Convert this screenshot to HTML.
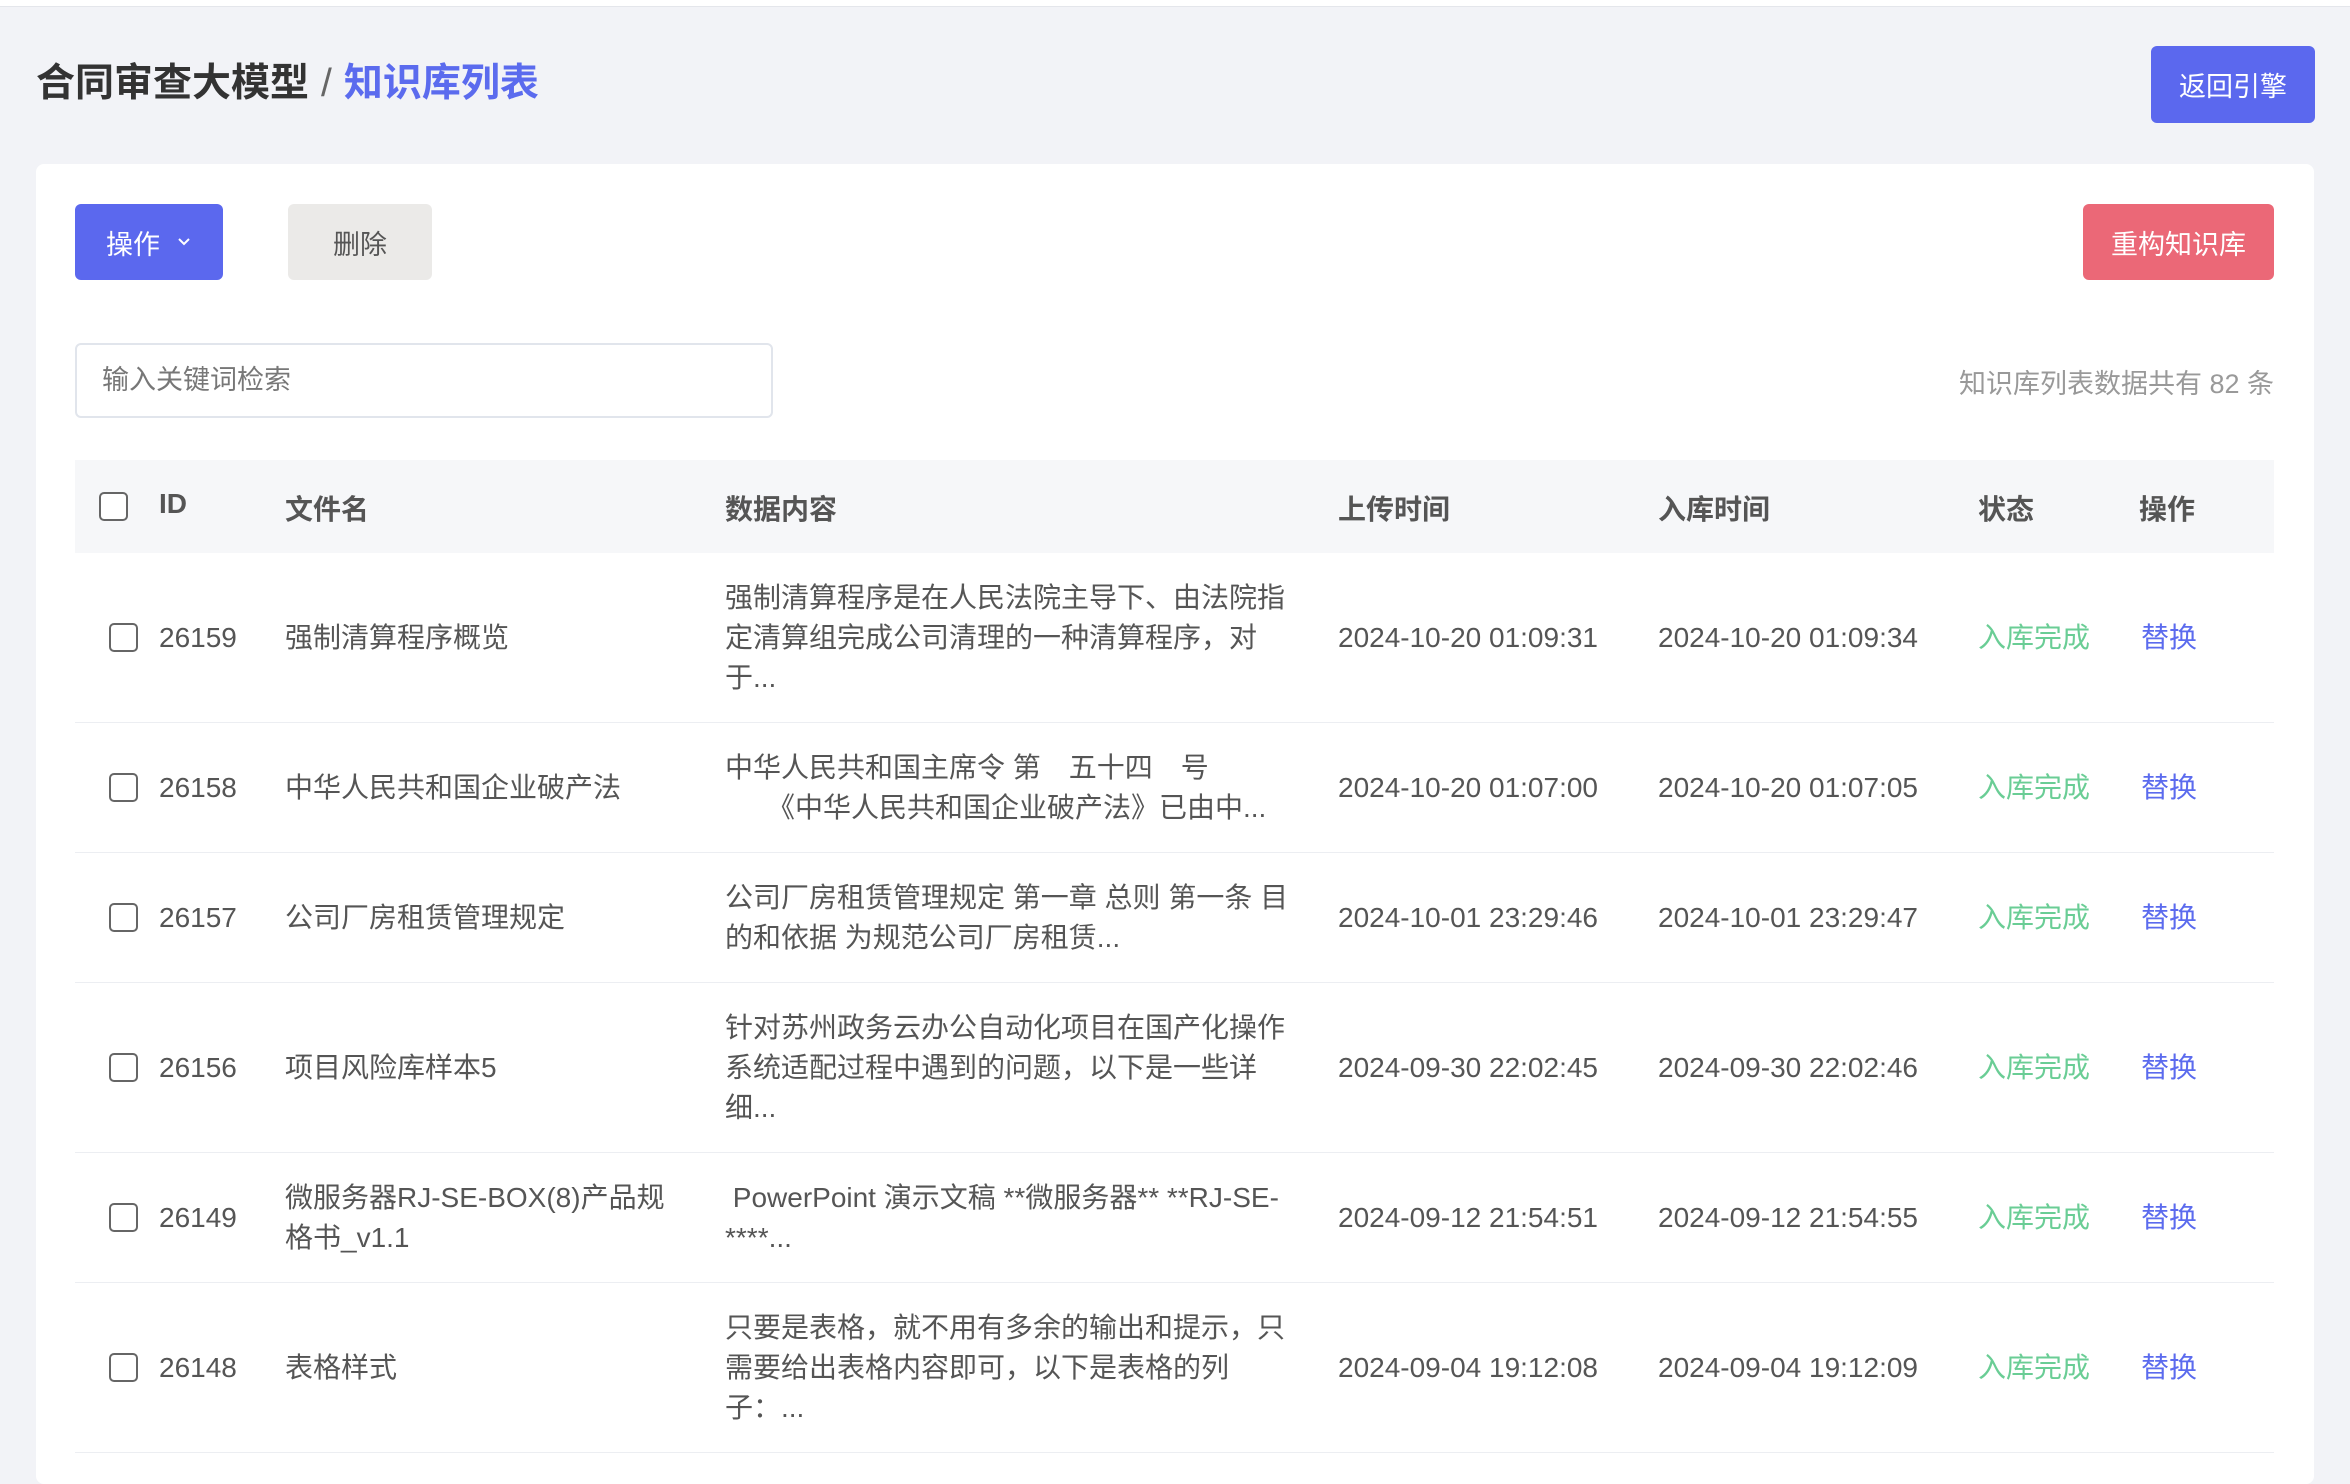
<!DOCTYPE html>
<html><head><meta charset="utf-8"><style>
*{margin:0;padding:0;box-sizing:border-box}
body{width:2350px;height:1458px;overflow:hidden;background:#f2f3f7;font-family:"Liberation Sans","Noto Sans CJK SC",sans-serif;color:#555;position:relative}
.top{position:absolute;left:0;top:0;width:2350px;height:7px;background:#fff;border-bottom:1px solid #e4e6eb}
.title{position:absolute;left:36px;top:60px;font-size:39px;font-weight:bold;color:#333;line-height:48px}
.title span{color:#5b6bee}
.title i{font-style:normal;color:#666;font-weight:normal;margin:0 12px}
.btn{position:absolute;border-radius:6px;color:#fff;font-size:27px;display:flex;align-items:center;justify-content:center}
.card{position:absolute;left:36px;top:164px;width:2278px;height:1320px;background:#fff;border-radius:8px}
.search{position:absolute;left:75px;top:343px;width:698px;height:75px;border:2px solid #e1e5ec;border-radius:6px;font-size:27px;color:#777;padding-left:25px;line-height:71px}
.count{position:absolute;right:76px;top:362px;font-size:27px;color:#999}
.thead{position:absolute;left:75px;top:460px;width:2199px;height:93px;background:#f6f7f9}
.cb{position:absolute;width:29px;height:29px;border:2px solid #666;border-radius:5px;background:#fff}
.h{position:absolute;font-size:28px;font-weight:bold;color:#555;top:488px}
.row{position:absolute;left:75px;width:2199px;border-bottom:1px solid #eceef2}
.c{position:absolute;font-size:28px;line-height:40px;color:#555}
.g{color:#6acd95}.b{color:#5b6bee}
</style></head><body>
<div class="top"></div>
<div class="title">合同审查大模型<i>/</i><span>知识库列表</span></div>
<div class="btn" style="left:2151px;top:46px;width:164px;height:77px;background:#5b68ee">返回引擎</div>
<div class="card"></div>
<div class="btn" style="left:75px;top:204px;width:148px;height:76px;background:#5b68ee">操作<svg width="16" height="12" style="margin-left:16px" viewBox="0 0 16 12"><path d="M3 3l5 5 5-5" stroke="#fff" stroke-width="2" fill="none"/></svg></div>
<div class="btn" style="left:288px;top:204px;width:144px;height:76px;background:#ebeae8;color:#555">删除</div>
<div class="btn" style="left:2083px;top:204px;width:191px;height:76px;background:#eb6877">重构知识库</div>
<div class="search">输入关键词检索</div>
<div class="count">知识库列表数据共有 82 条</div>
<div class="thead"></div>
<div class="cb" style="left:99px;top:492px"></div>
<div class="h" style="left:159px">ID</div>
<div class="h" style="left:285px">文件名</div>
<div class="h" style="left:725px">数据内容</div>
<div class="h" style="left:1338px">上传时间</div>
<div class="h" style="left:1658px">入库时间</div>
<div class="h" style="left:1978px">状态</div>
<div class="h" style="left:2139px">操作</div>

<div class="row" style="top:553px;height:170px"></div>
<div class="cb" style="left:109px;top:623px"></div>
<div class="c" style="left:159px;top:618px">26159</div>
<div class="c" style="left:285px;top:618px">强制清算程序概览</div>
<div class="c" style="left:725px;top:578px;width:565px">强制清算程序是在人民法院主导下、由法院指定清算组完成公司清理的一种清算程序，对于...</div>
<div class="c" style="left:1338px;top:618px">2024-10-20 01:09:31</div>
<div class="c" style="left:1658px;top:618px">2024-10-20 01:09:34</div>
<div class="c g" style="left:1978px;top:618px">入库完成</div>
<div class="c b" style="left:2141px;top:618px">替换</div>

<div class="row" style="top:723px;height:130px"></div>
<div class="cb" style="left:109px;top:773px"></div>
<div class="c" style="left:159px;top:768px">26158</div>
<div class="c" style="left:285px;top:768px">中华人民共和国企业破产法</div>
<div class="c" style="left:725px;top:748px;width:580px;white-space:pre">中华人民共和国主席令 第　五十四　号
　　《中华人民共和国企业破产法》已由中...</div>
<div class="c" style="left:1338px;top:768px">2024-10-20 01:07:00</div>
<div class="c" style="left:1658px;top:768px">2024-10-20 01:07:05</div>
<div class="c g" style="left:1978px;top:768px">入库完成</div>
<div class="c b" style="left:2141px;top:768px">替换</div>

<div class="row" style="top:853px;height:130px"></div>
<div class="cb" style="left:109px;top:903px"></div>
<div class="c" style="left:159px;top:898px">26157</div>
<div class="c" style="left:285px;top:898px">公司厂房租赁管理规定</div>
<div class="c" style="left:725px;top:878px;width:565px">公司厂房租赁管理规定 第一章 总则 第一条 目的和依据 为规范公司厂房租赁...</div>
<div class="c" style="left:1338px;top:898px">2024-10-01 23:29:46</div>
<div class="c" style="left:1658px;top:898px">2024-10-01 23:29:47</div>
<div class="c g" style="left:1978px;top:898px">入库完成</div>
<div class="c b" style="left:2141px;top:898px">替换</div>

<div class="row" style="top:983px;height:170px"></div>
<div class="cb" style="left:109px;top:1053px"></div>
<div class="c" style="left:159px;top:1048px">26156</div>
<div class="c" style="left:285px;top:1048px">项目风险库样本5</div>
<div class="c" style="left:725px;top:1008px;width:565px">针对苏州政务云办公自动化项目在国产化操作系统适配过程中遇到的问题，以下是一些详细...</div>
<div class="c" style="left:1338px;top:1048px">2024-09-30 22:02:45</div>
<div class="c" style="left:1658px;top:1048px">2024-09-30 22:02:46</div>
<div class="c g" style="left:1978px;top:1048px">入库完成</div>
<div class="c b" style="left:2141px;top:1048px">替换</div>

<div class="row" style="top:1153px;height:130px"></div>
<div class="cb" style="left:109px;top:1203px"></div>
<div class="c" style="left:159px;top:1198px">26149</div>
<div class="c" style="left:285px;top:1178px;width:385px">微服务器RJ-SE-BOX(8)产品规格书_v1.1</div>
<div class="c" style="left:725px;top:1178px;width:580px;white-space:pre"> PowerPoint 演示文稿 **微服务器** **RJ-SE-
****...</div>
<div class="c" style="left:1338px;top:1198px">2024-09-12 21:54:51</div>
<div class="c" style="left:1658px;top:1198px">2024-09-12 21:54:55</div>
<div class="c g" style="left:1978px;top:1198px">入库完成</div>
<div class="c b" style="left:2141px;top:1198px">替换</div>

<div class="row" style="top:1283px;height:170px"></div>
<div class="cb" style="left:109px;top:1353px"></div>
<div class="c" style="left:159px;top:1348px">26148</div>
<div class="c" style="left:285px;top:1348px">表格样式</div>
<div class="c" style="left:725px;top:1308px;width:565px">只要是表格，就不用有多余的输出和提示，只需要给出表格内容即可，以下是表格的列子：...</div>
<div class="c" style="left:1338px;top:1348px">2024-09-04 19:12:08</div>
<div class="c" style="left:1658px;top:1348px">2024-09-04 19:12:09</div>
<div class="c g" style="left:1978px;top:1348px">入库完成</div>
<div class="c b" style="left:2141px;top:1348px">替换</div>
</body></html>
